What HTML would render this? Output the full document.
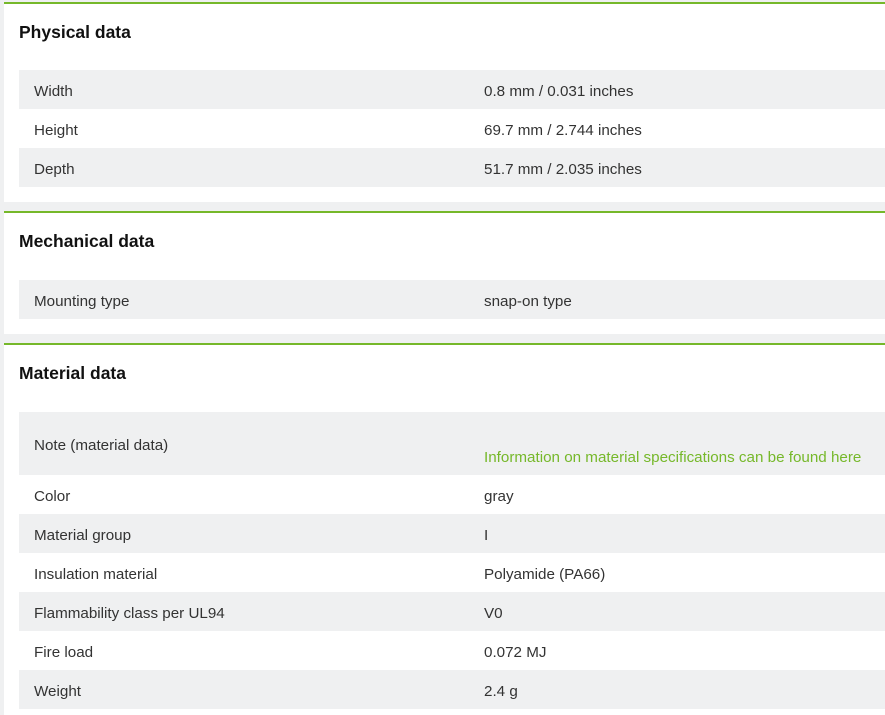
<!DOCTYPE html>
<html><head><style>
body{margin:0;background:#eff0f1;font-family:"Liberation Sans",sans-serif;color:#222;width:885px;height:707px;overflow:hidden;position:relative}
.card{position:absolute;left:4px;right:0;background:#fff;border-top:2px solid #76b82a}
.card h2{margin:0;position:absolute;left:15px;font-size:17.5px;font-weight:bold;color:#111}
.row{position:absolute;left:15px;right:0;height:39px;font-size:15.2px;color:#333}
.row.g{background:#eff0f1}
.row span{position:absolute;top:13px}
.row .k{left:15px}.row .v{left:465px}
</style></head><body>
<div class="card" style="top:2px;height:198px">
<h2 style="top:18px">Physical data</h2>
<div class="row g" style="top:66px"><span class="k">Width</span><span class="v">0.8 mm / 0.031 inches</span></div>
<div class="row" style="top:105px"><span class="k">Height</span><span class="v">69.7 mm / 2.744 inches</span></div>
<div class="row g" style="top:144px"><span class="k">Depth</span><span class="v">51.7 mm / 2.035 inches</span></div>
</div>
<div class="card" style="top:211px;height:121px">
<h2 style="top:18px">Mechanical data</h2>
<div class="row g" style="top:67px"><span class="k">Mounting type</span><span class="v">snap-on type</span></div>
</div>
<div class="card" style="top:343px;height:370px">
<h2 style="top:18px">Material data</h2>
<div class="row g" style="top:67px;height:63px"><span class="k" style="top:25px">Note (material data)</span><span class="v" style="top:37px;color:#76b82a">Information on material specifications can be found here</span></div>
<div class="row" style="top:130px"><span class="k">Color</span><span class="v">gray</span></div>
<div class="row g" style="top:169px"><span class="k">Material group</span><span class="v">I</span></div>
<div class="row" style="top:208px"><span class="k">Insulation material</span><span class="v">Polyamide (PA66)</span></div>
<div class="row g" style="top:247px"><span class="k">Flammability class per UL94</span><span class="v">V0</span></div>
<div class="row" style="top:286px"><span class="k">Fire load</span><span class="v">0.072 MJ</span></div>
<div class="row g" style="top:325px"><span class="k">Weight</span><span class="v">2.4 g</span></div>
</div>
</body></html>
